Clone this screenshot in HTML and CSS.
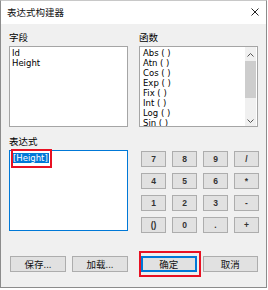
FILE: index.html
```html
<!DOCTYPE html>
<html lang="zh">
<head>
    <meta charset="UTF-8">
    <title>表达式构建器</title>
    <link rel="stylesheet" href="styles.css">
</head>
<body>

<div class="window">
    <div class="titlebar">
        <span class="title">表达式构建器</span>
        <svg class="close" width="8" height="8" viewBox="0 0 8 8">
            <path d="M0.5 0.5 L7.5 7.5 M7.5 0.5 L0.5 7.5" stroke="#222" stroke-width="1"/>
        </svg>
    </div>

    <div class="content">
        <div class="top">
            <div class="col">
                <div class="label">字段</div>
                <div class="listbox">
                    <div class="item">Id</div>
                    <div class="item">Height</div>
                </div>
            </div>
            <div class="col">
                <div class="label">函数</div>
                <div class="listbox funcs">
                    <div class="items">
                        <div class="item">Abs ( )</div>
                        <div class="item">Atn ( )</div>
                        <div class="item">Cos ( )</div>
                        <div class="item">Exp ( )</div>
                        <div class="item">Fix ( )</div>
                        <div class="item">Int ( )</div>
                        <div class="item">Log ( )</div>
                        <div class="item">Sin ( )</div>
                    </div>
                    <div class="scrollbar">
                        <svg class="arrow" width="7" height="4" viewBox="0 0 7 4">
                            <path d="M0.5 3.5 L3.5 0.5 L6.5 3.5" fill="none" stroke="#555" stroke-width="1"/>
                        </svg>
                        <div class="thumb"></div>
                        <svg class="arrow down" width="7" height="4" viewBox="0 0 7 4">
                            <path d="M0.5 0.5 L3.5 3.5 L6.5 0.5" fill="none" stroke="#555" stroke-width="1"/>
                        </svg>
                    </div>
                </div>
            </div>
        </div>

        <div class="middle">
            <div class="col expr-col">
                <div class="label">表达式</div>
                <div class="expr">
                    <span class="selected">[Height]</span>
                </div>
                <div class="mark mark-expr"></div>
            </div>
            <div class="col keypad-col">
                <div class="keypad">
                    <button class="key">7</button>
                    <button class="key">8</button>
                    <button class="key">9</button>
                    <button class="key">/</button>
                    <button class="key">4</button>
                    <button class="key">5</button>
                    <button class="key">6</button>
                    <button class="key">*</button>
                    <button class="key">1</button>
                    <button class="key">2</button>
                    <button class="key">3</button>
                    <button class="key">-</button>
                    <button class="key">()</button>
                    <button class="key">0</button>
                    <button class="key">.</button>
                    <button class="key">+</button>
                </div>
            </div>
        </div>

        <div class="actions">
            <div class="pair left-pair">
                <button class="btn">保存...</button>
                <button class="btn">加载...</button>
            </div>
            <div class="pair right-pair">
                <button class="btn default">确定</button>
                <button class="btn">取消</button>
                <div class="mark mark-ok"></div>
            </div>
        </div>
    </div>
</div>

</body>
</html>
```

FILE: styles.css
```css
* {
    margin: 0;
    padding: 0;
    box-sizing: border-box;
}

body {
    width: 268px;
    height: 290px;
    background: #fff;
    font-family: "DejaVu Sans", "Noto Sans CJK SC", sans-serif;
    font-size: 9px;
    color: #000;
    overflow: hidden;
}

.window {
    width: 267px;
    height: 288px;
    border: 1px solid #8c8c8c;
    border-top-color: #c8c8c8;
    background: #f0f0f0;
}

.titlebar {
    height: 23px;
    background: #fff;
    display: flex;
    align-items: center;
    justify-content: space-between;
    padding: 0 7px 1px 6px;
}

.title {
    font-family: "Noto Sans CJK SC", sans-serif;
    font-size: 9.5px;
    color: #111;
}

.close {
    display: block;
    margin-top: -1px;
}

.content {
    padding: 7px 8px 0 8px;
}

.top,
.middle {
    display: grid;
    grid-template-columns: 119px 119px;
    column-gap: 11px;
}

.label {
    font-family: "Noto Sans CJK SC", sans-serif;
    font-size: 9.5px;
    height: 12px;
    line-height: 12px;
    margin-bottom: 3px;
}

.listbox {
    height: 81px;
    background: #fff;
    border: 1px solid #a5a5a5;
    padding: 1px 2px 0;
    overflow: hidden;
}

.item {
    line-height: 10px;
    height: 10px;
    white-space: nowrap;
    font-size: 8.5px;
}

.funcs {
    display: flex;
    padding: 0 1px 0 3px;
}

.funcs .items {
    padding-top: 1px;
}

.items {
    flex: 1;
}

.scrollbar {
    width: 11px;
    height: 79px;
    background: #f0f0f0;
    display: flex;
    flex-direction: column;
    align-items: center;
}

.arrow {
    display: block;
    margin-top: 6px;
}

.arrow.down {
    margin-top: 21px;
}

.thumb {
    width: 11px;
    height: 37px;
    margin-top: 4px;
    background: #cdcdcd;
}

.middle {
    margin-top: 8px;
}

.expr-col {
    position: relative;
}

.expr {
    height: 81px;
    background: #fff;
    border: 1px solid #0078d7;
    padding: 2px 3px;
}

.selected {
    display: inline-block;
    background: #0078d7;
    color: #fff;
    font-size: 8.5px;
    line-height: 10px;
    padding: 0 1px 0 0;
}

.mark {
    position: absolute;
    border: 2px solid #e81123;
}

.mark-expr {
    left: 2px;
    top: 14px;
    width: 41px;
    height: 19px;
}

.keypad-col {
    padding: 16px 0 0 2px;
}

.keypad {
    display: grid;
    grid-template-columns: repeat(4, 25px);
    grid-auto-rows: 16px;
    column-gap: 6px;
    row-gap: 6px;
}

.key,
.btn {
    background: #e1e1e1;
    border: 1px solid #adadad;
    color: #111;
}

.key {
    font-family: "Liberation Sans", sans-serif;
    font-weight: bold;
    font-size: 8.5px;
    color: #333;
}

.actions {
    margin-top: 23px;
    display: grid;
    grid-template-columns: 119px 119px;
    column-gap: 11px;
}

.pair {
    display: flex;
    gap: 6px;
    position: relative;
}

.left-pair {
    padding-left: 1px;
}

.left-pair .btn {
    width: 56px;
    height: 16px;
}

.right-pair {
    padding-left: 2px;
}

.right-pair .btn {
    width: 56px;
    height: 16px;
}

.btn {
    font-family: "Noto Sans CJK SC", sans-serif;
    font-size: 9.5px;
    line-height: 12px;
}

.btn.default {
    border: 1px solid #0078d7;
    box-shadow: inset 0 0 0 1px #0078d7;
}

.mark-ok {
    left: 0;
    top: -5px;
    width: 62px;
    height: 26px;
}
```
